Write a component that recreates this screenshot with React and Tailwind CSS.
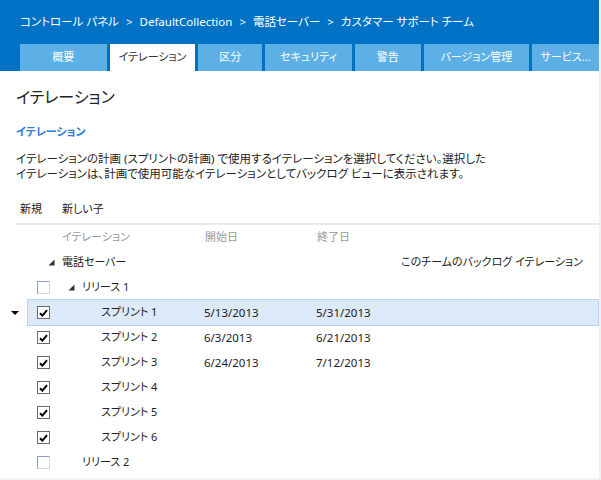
import React from "react";

const tabs = [
  { label: "概要", w: "w-[87px]" },
  { label: "イテレーション", w: "w-[86px]", active: true },
  { label: "区分", w: "w-[64px]" },
  { label: "セキュリティ", w: "w-[87px]" },
  { label: "警告", w: "w-[66px]" },
  { label: "バージョン管理", w: "w-[106px]" },
  { label: "サービス...", w: "w-[67px]" },
];

const rows = [
  { name: "電話セーバー", kind: "root", right: "このチームのバックログ イテレーション" },
  { name: "リリース 1", kind: "release", expand: true },
  { name: "スプリント 1", kind: "sprint", checked: true, start: "5/13/2013", end: "5/31/2013", selected: true },
  { name: "スプリント 2", kind: "sprint", checked: true, start: "6/3/2013", end: "6/21/2013" },
  { name: "スプリント 3", kind: "sprint", checked: true, start: "6/24/2013", end: "7/12/2013" },
  { name: "スプリント 4", kind: "sprint", checked: true },
  { name: "スプリント 5", kind: "sprint", checked: true },
  { name: "スプリント 6", kind: "sprint", checked: true },
  { name: "リリース 2", kind: "release" },
];

function Expander() {
  return (
    <svg width="7" height="7" viewBox="0 0 7 7" className="shrink-0">
      <polygon points="6.5,0.5 6.5,6.5 0.5,6.5" fill="#333" />
    </svg>
  );
}

function Checkbox({ checked }) {
  if (checked) {
    return (
      <div className="w-[13px] h-[13px] border border-[#6b6b6b] bg-white flex items-center justify-center shrink-0">
        <svg width="9" height="8" viewBox="0 0 9 8">
          <path d="M1 4.2 L3.4 6.6 L8 1.2" stroke="#000" strokeWidth="2" fill="none" />
        </svg>
      </div>
    );
  }
  return (
    <div className="w-[13px] h-[13px] border border-t-[#8f9ad6] border-l-[#8f9ad6] border-r-[#d8d8d8] border-b-[#d8d8d8] bg-white shrink-0" />
  );
}

function Row({ row }) {
  const box = row.selected
    ? "bg-[#dce9f8] border border-[#b4d2f2] -my-px"
    : "border border-transparent -my-px";
  return (
    <div className="flex h-[25px] items-stretch">
      <div className="w-[25px] flex items-center justify-center">
        {row.selected && (
          <svg width="8" height="4" viewBox="0 0 8 4">
            <polygon points="0,0 8,0 4,4" fill="#000" />
          </svg>
        )}
      </div>
      <div className={`flex-1 flex items-center ${box}`}>
        <div className="w-[176px] flex items-center">
          {row.kind === "root" ? (
            <div className="flex items-center pl-[20px] gap-[7px]">
              <Expander />
              <span>{row.name}</span>
            </div>
          ) : (
            <div className="flex items-center pl-[9px]">
              <Checkbox checked={row.checked} />
              {row.kind === "release" ? (
                row.expand ? (
                  <div className="flex items-center pl-[18px] gap-[7px]">
                    <Expander />
                    <span>{row.name}</span>
                  </div>
                ) : (
                  <span className="pl-[32px]">{row.name}</span>
                )
              ) : (
                <span className="pl-[51px]">{row.name}</span>
              )}
            </div>
          )}
        </div>
        <div className="w-[112px] text-[11.5px]">{row.start}</div>
        <div className="w-[80px] text-[11.5px]">{row.end}</div>
        {row.right && <div className="flex-1 text-right pr-[15px]">{row.right}</div>}
      </div>
    </div>
  );
}

export default function App() {
  return (
    <div className="w-[601px] h-[480px] bg-[#f1f1f1] font-['Noto_Sans','Noto_Sans_CJK_JP',sans-serif] [font-feature-settings:'palt'] text-[11px] text-[#222] overflow-hidden">
      <div className="w-[599px] h-[478px] bg-white flex flex-col">
        {/* header */}
        <div className="h-[71px] bg-[#0072c6] flex flex-col">
          <div className="h-[44px] flex items-center pl-[20px] pb-[1px] text-white text-[11.5px] gap-[7px]">
            <span>コントロール パネル</span>
            <span>&gt;</span>
            <span>DefaultCollection</span>
            <span>&gt;</span>
            <span>電話セーバー</span>
            <span>&gt;</span>
            <span>カスタマー サポート チーム</span>
          </div>
          <div className="flex-1 flex pl-[20px] gap-[3px]">
            {tabs.map((t) => (
              <div
                key={t.label}
                className={`${t.w} flex items-center justify-center ${
                  t.active ? "bg-white text-[#333]" : "bg-[#5cb0e6] text-white"
                }`}
              >
                {t.label}
              </div>
            ))}
          </div>
        </div>

        {/* content */}
        <div className="flex-1 ml-[2px] flex flex-col">
          <h1 className="mt-[14px] ml-[14px] text-[16px] leading-[24px] text-[#222]">イテレーション</h1>
          <div className="mt-[15px] ml-[14px] font-bold text-[#2f7bd6] leading-[16px]">イテレーション</div>
          <p className="mt-[11px] ml-[14px] text-[11.5px] leading-[15px] whitespace-nowrap">
            イテレーションの計画 (スプリントの計画) で使用するイテレーションを選択してください。選択した
            <br />
            イテレーションは、計画で使用可能なイテレーションとしてバックログ ビューに表示されます。
          </p>
          <div className="mt-[20px] ml-[18px] flex gap-[20px] leading-[16px]">
            <span>新規</span>
            <span>新しい子</span>
          </div>
          <div className="mt-[6px] ml-[14px] h-[2px] bg-[#ebebeb]" />

          <div className="flex flex-col">
            <div className="flex h-[25px] items-center text-[#9a9a9a]">
              <div className="w-[25px]" />
              <div className="w-[176px] pl-[34px] ml-px">イテレーション</div>
              <div className="w-[112px] ml-px">開始日</div>
              <div className="w-[80px]">終了日</div>
            </div>
            {rows.map((r) => (
              <Row key={r.name} row={r} />
            ))}
          </div>
        </div>
      </div>
    </div>
  );
}
